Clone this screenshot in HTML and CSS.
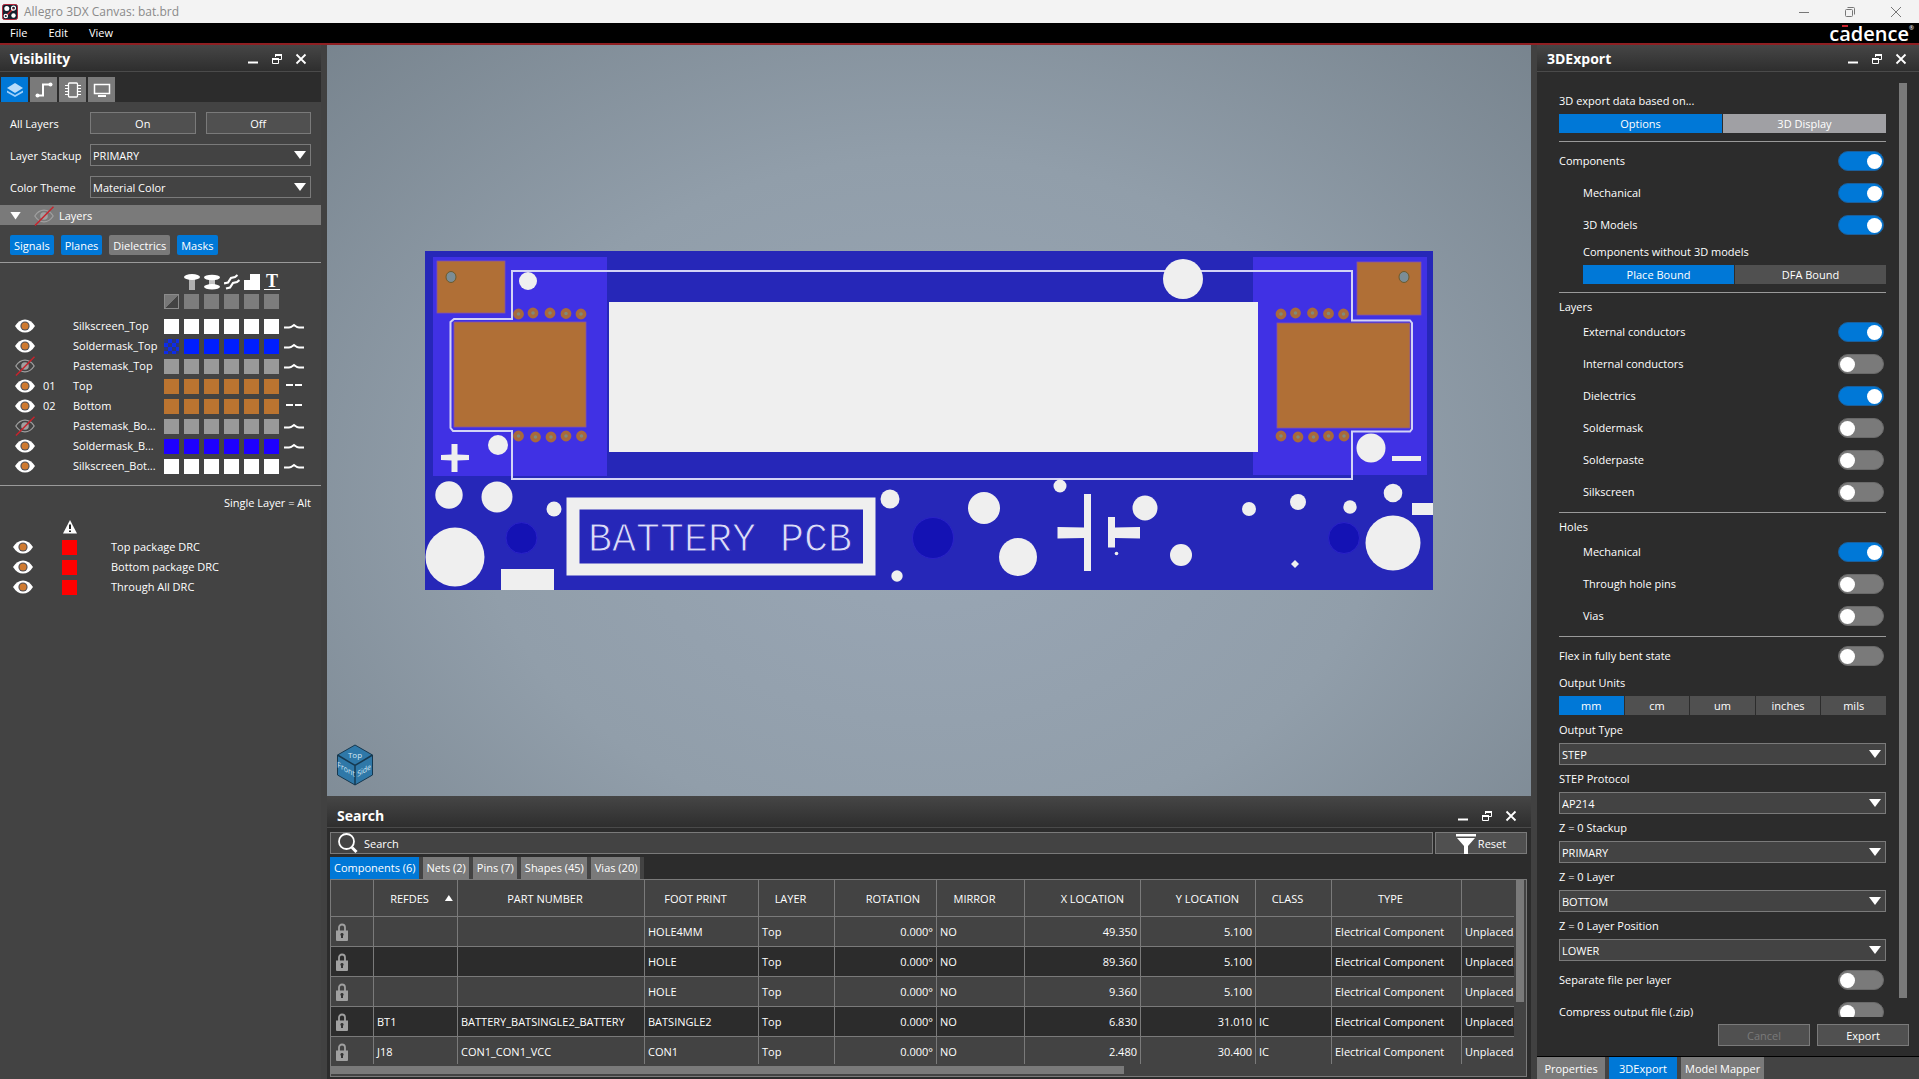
FILE: index.html
```html
<!DOCTYPE html>
<html lang="en">
<head>
<meta charset="utf-8">
<title>Allegro 3DX Canvas: bat.brd</title>
<link rel="stylesheet" href="styles.css">
</head>
<body>
<svg class="defs" aria-hidden="true">
  <symbol id="i-min" viewBox="0 0 12 12"><path d="M1 9.500h10" stroke="#fff" stroke-width="2"/></symbol>
  <symbol id="i-restore" viewBox="0 0 12 12"><path d="M4.500 4V1.500h6v5H8M1.500 5.500h6v5h-6z" fill="none" stroke="#fff"/><path d="M4 2h7M1 6h7" stroke="#fff" stroke-width="2"/></symbol>
  <symbol id="i-close" viewBox="0 0 12 12"><path d="M1.500 1.500l9 9M10.500 1.500l-9 9" stroke="#fff" stroke-width="1.800"/></symbol>
  <symbol id="i-eye" viewBox="0 0 20 14"><path d="M0 7Q4 .4 10 .4T20 7Q16 13.600 10 13.600T0 7z" fill="#fff"/><circle cx="10" cy="7" r="4.600" fill="#4d4d55"/><circle cx="10" cy="7" r="3.500" fill="#cf7a30"/></symbol>
  <symbol id="i-eye-off" viewBox="0 0 20 20"><path d="M.8 10Q4.500 4.200 10 4.200T19.200 10Q15.500 15.800 10 15.800T.8 10z" fill="none" stroke="#a0a0a0" stroke-width="1.200"/><circle cx="10" cy="10" r="3.800" fill="#a0a0a0"/><path d="M1 19.500L19.500 .8" stroke="#c8232c" stroke-width="1.500"/></symbol>
  <symbol id="i-wave" viewBox="0 0 20 8"><path d="M0 5.500h5q2 0 5-2.500q3 2.500 5 2.500h5" fill="none" stroke="#fff" stroke-width="2"/></symbol>
  <symbol id="i-dash" viewBox="0 0 20 8"><path d="M2 3h7M11 3h7" stroke="#fff" stroke-width="2"/></symbol>
  <symbol id="i-lock" viewBox="0 0 12 18"><path d="M3 8V4.500a3 3 0 0 1 6 0V8" fill="none" stroke="#a0a0a0" stroke-width="1.800"/><path d="M0 7.500h12V17a1 1 0 0 1-1 1H1a1 1 0 0 1-1-1z" fill="#a0a0a0"/><path d="M6 10a1.500 1.500 0 0 1 1 2.700V15H5v-2.300A1.500 1.500 0 0 1 6 10z" fill="#333"/></symbol>
</svg>

<div class="app">
  <header class="titlebar">
    <svg class="app-icon" viewBox="0 0 16 16" aria-hidden="true"><rect x=".5" y=".5" width="15" height="15" rx="2" fill="#14202e" stroke="#b5263a"/><path d="M4.500 11.500l7-7" stroke="#c8232c" stroke-width="1.500"/><circle cx="4.800" cy="4.500" r="2.500" fill="#fff"/><circle cx="11.500" cy="4.200" r="2" fill="none" stroke="#fff" stroke-width="1.200"/><circle cx="3.800" cy="12" r="1.700" fill="none" stroke="#fff" stroke-width="1.200"/><circle cx="11.500" cy="11.500" r="2.200" fill="#fff"/></svg>
    <h1 class="app-title">Allegro 3DX Canvas: bat.brd</h1>
    <div class="win-controls">
      <button aria-label="Minimize"><svg viewBox="0 0 12 12"><path d="M1 6.500h10"/></svg></button>
      <button aria-label="Restore"><svg viewBox="0 0 12 12"><rect x="1.500" y="3.500" width="7" height="7" rx="1"/><path d="M3.500 1.500h6a1 1 0 0 1 1 1v6"/></svg></button>
      <button aria-label="Close"><svg viewBox="0 0 12 12"><path d="M1 1l10 10M11 1L1 11"/></svg></button>
    </div>
  </header>
  <nav class="menubar">
    <button>File</button><button>Edit</button><button>View</button>
    <div class="brand">c<span class="brand-a">a</span>dence<span class="brand-mark">®</span></div>
  </nav>

  <div class="workspace">
    <aside class="panel left">
      <div class="panel-head">
        <h2>Visibility</h2>
        <button aria-label="Minimize"><svg><use href="#i-min"/></svg></button>
        <button aria-label="Float"><svg><use href="#i-restore"/></svg></button>
        <button aria-label="Close"><svg><use href="#i-close"/></svg></button>
      </div>
      <div class="mode-tabs">
        <button class="active" aria-label="Layers"><svg viewBox="0 0 18 16"><path d="M1 8.500l8 4.500 8-4.500v2l-8 4.500-8-4.500z" fill="#9fd0fb"/><path d="M9 1l8 5-8 5-8-5z" fill="#b9dcfa"/></svg></button>
        <button aria-label="Nets"><svg viewBox="0 0 18 16"><path d="M2 13.500h6v-11h7" fill="none" stroke="#fff" stroke-width="2"/><circle cx="2.500" cy="13.500" r="2" fill="#fff"/><circle cx="15.500" cy="2.500" r="2" fill="#fff"/></svg></button>
        <button aria-label="Components"><svg viewBox="0 0 18 16"><rect x="4.500" y="1" width="9" height="14" rx="1" fill="none" stroke="#fff" stroke-width="1.300"/><path d="M1 3.500h3M1 6.500h3M1 9.500h3M1 12.500h3M14 3.500h3M14 6.500h3M14 9.500h3M14 12.500h3" stroke="#fff"/></svg></button>
        <button aria-label="Display"><svg viewBox="0 0 18 16"><path d="M1.500 2.500h15v9h-15z" fill="none" stroke="#fff" stroke-width="1.500"/><path d="M5 14h8" stroke="#fff" stroke-width="2"/></svg></button>
      </div>
      <div class="form">
        <span>All Layers</span>
        <div class="pair"><button class="btn">On</button><button class="btn">Off</button></div>
        <label for="stackup">Layer Stackup</label>
        <div class="select"><select id="stackup"><option>PRIMARY</option></select></div>
        <label for="theme">Color Theme</label>
        <div class="select"><select id="theme"><option>Material Color</option></select></div>
      </div>
      <button class="group-bar"><i class="tri-down"></i><svg class="eye-off"><use href="#i-eye-off"/></svg>Layers</button>
      <div class="chips">
        <button class="chip on">Signals</button><button class="chip on">Planes</button><button class="chip">Dielectrics</button><button class="chip on">Masks</button>
      </div>
      <hr>
      <table class="layers">
        <colgroup><col class="c-eye"><col class="c-num"><col class="c-name"><col class="c-sw"><col class="c-sw"><col class="c-sw"><col class="c-sw"><col class="c-sw"><col class="c-sw"><col class="c-line"></colgroup>
        <thead>
          <tr class="objects">
            <td></td><td></td><td></td><td></td>
            <td><svg class="obj" viewBox="0 0 16 16"><path d="M5 4h6v12H5z" fill="#b0b0b0"/><ellipse cx="8" cy="3" rx="8" ry="3" fill="#fff"/></svg></td>
            <td><svg class="obj" viewBox="0 0 16 16"><path d="M5 3h6v10H5z" fill="#c4c4c4"/><ellipse cx="8" cy="3.500" rx="8" ry="2.700" fill="#fff"/><ellipse cx="8" cy="12.800" rx="8" ry="2.700" fill="#fff"/></svg></td>
            <td><svg class="obj" viewBox="0 0 16 16"><path d="M0 9.500l4-1 3-4.500 4-1 2.500-2M2 14.500l4-1 3-4.500 4-1 2.500-2" fill="none" stroke="#fff" stroke-width="2.200"/></svg></td>
            <td><svg class="obj" viewBox="0 0 16 16"><path d="M6 0h10v16H0V6h6z" fill="#fff"/></svg></td>
            <td><span class="obj text-obj">T</span></td>
            <td></td>
          </tr>
          <tr class="all">
            <td></td><td></td><td></td>
            <td><button class="sw half" aria-label="All"></button></td><td><button class="sw"></button></td><td><button class="sw"></button></td><td><button class="sw"></button></td><td><button class="sw"></button></td><td><button class="sw"></button></td><td></td>
          </tr>
        </thead>
        <tbody>
          <tr class="white"><td><svg class="eye"><use href="#i-eye"/></svg></td><td></td><td>Silkscreen_Top</td><td><button class="sw"></button></td><td><button class="sw"></button></td><td><button class="sw"></button></td><td><button class="sw"></button></td><td><button class="sw"></button></td><td><button class="sw"></button></td><td><svg class="line"><use href="#i-wave"/></svg></td></tr>
          <tr class="blue"><td><svg class="eye"><use href="#i-eye"/></svg></td><td></td><td>Soldermask_Top</td><td><button class="sw check"></button></td><td><button class="sw"></button></td><td><button class="sw"></button></td><td><button class="sw"></button></td><td><button class="sw"></button></td><td><button class="sw"></button></td><td><svg class="line"><use href="#i-wave"/></svg></td></tr>
          <tr class="grey"><td><svg class="eye-off"><use href="#i-eye-off"/></svg></td><td></td><td>Pastemask_Top</td><td><button class="sw"></button></td><td><button class="sw"></button></td><td><button class="sw"></button></td><td><button class="sw"></button></td><td><button class="sw"></button></td><td><button class="sw"></button></td><td><svg class="line"><use href="#i-wave"/></svg></td></tr>
          <tr class="copper"><td><svg class="eye"><use href="#i-eye"/></svg></td><td>01</td><td>Top</td><td><button class="sw"></button></td><td><button class="sw"></button></td><td><button class="sw"></button></td><td><button class="sw"></button></td><td><button class="sw"></button></td><td><button class="sw"></button></td><td><svg class="line"><use href="#i-dash"/></svg></td></tr>
          <tr class="copper"><td><svg class="eye"><use href="#i-eye"/></svg></td><td>02</td><td>Bottom</td><td><button class="sw"></button></td><td><button class="sw"></button></td><td><button class="sw"></button></td><td><button class="sw"></button></td><td><button class="sw"></button></td><td><button class="sw"></button></td><td><svg class="line"><use href="#i-dash"/></svg></td></tr>
          <tr class="grey"><td><svg class="eye-off"><use href="#i-eye-off"/></svg></td><td></td><td>Pastemask_Bo...</td><td><button class="sw"></button></td><td><button class="sw"></button></td><td><button class="sw"></button></td><td><button class="sw"></button></td><td><button class="sw"></button></td><td><button class="sw"></button></td><td><svg class="line"><use href="#i-wave"/></svg></td></tr>
          <tr class="violet"><td><svg class="eye"><use href="#i-eye"/></svg></td><td></td><td>Soldermask_B...</td><td><button class="sw"></button></td><td><button class="sw"></button></td><td><button class="sw"></button></td><td><button class="sw"></button></td><td><button class="sw"></button></td><td><button class="sw"></button></td><td><svg class="line"><use href="#i-wave"/></svg></td></tr>
          <tr class="white"><td><svg class="eye"><use href="#i-eye"/></svg></td><td></td><td>Silkscreen_Bot...</td><td><button class="sw"></button></td><td><button class="sw"></button></td><td><button class="sw"></button></td><td><button class="sw"></button></td><td><button class="sw"></button></td><td><button class="sw"></button></td><td><svg class="line"><use href="#i-wave"/></svg></td></tr>
        </tbody>
      </table>
      <hr>
      <p class="hint">Single Layer = Alt</p>
      <ul class="drc">
        <li class="drc-head"><svg viewBox="0 0 16 14"><path d="M8 0l7 13.500H1z" fill="#fff"/><path d="M8 4.500v4.500M8 10.500v1.500" stroke="#222" stroke-width="2"/></svg></li>
        <li><svg class="eye"><use href="#i-eye"/></svg><button class="sw" aria-label="Top package DRC color"></button><span>Top package DRC</span></li>
        <li><svg class="eye"><use href="#i-eye"/></svg><button class="sw" aria-label="Bottom package DRC color"></button><span>Bottom package DRC</span></li>
        <li><svg class="eye"><use href="#i-eye"/></svg><button class="sw" aria-label="Through All DRC color"></button><span>Through All DRC</span></li>
      </ul>
    </aside>

    <main class="center">
      <div class="viewport">
        <svg class="board" viewBox="327 45 1204 751" aria-label="Board">
          <rect x="425" y="251" width="1008" height="339" fill="#2627b8"/>
          <rect x="433" y="257" width="174" height="219" fill="#4031e4"/>
          <rect x="1253" y="257" width="174" height="218" fill="#4031e4"/>
          <g fill="#b06f36" stroke="#8a55a0" stroke-width=".8">
            <rect x="437" y="261" width="68" height="52"/>
            <rect x="454" y="322" width="132" height="105"/>
            <rect x="1357" y="262" width="64" height="53"/>
            <rect x="1277" y="323" width="133" height="105"/>
          </g>
          <g fill="#7b8d96" stroke="#6d5a2c"><ellipse cx="451" cy="277" rx="5" ry="5.500"/><ellipse cx="1404" cy="277" rx="5" ry="5.500"/></g>
          <path d="M512 271H1352V320.500H1410L1412 323V429L1410 431.500H1352V479H512V431H453L450.500 428V322L454 319H512Z" fill="none" stroke="#d3d3f6" stroke-width="2"/>
          <g fill="#efefef">
            <rect x="609" y="302" width="649" height="150"/>
            <circle cx="528" cy="281" r="9"/><circle cx="1183" cy="279" r="20"/>
            <circle cx="498" cy="445" r="10"/><circle cx="1371" cy="448" r="14.500"/>
            <circle cx="449" cy="495" r="13.700"/><circle cx="497" cy="497" r="15.500"/>
            <circle cx="554" cy="509" r="7.500"/><circle cx="455" cy="557" r="29.500"/>
            <circle cx="890" cy="499" r="9.500"/><circle cx="897" cy="576" r="5.700"/>
            <circle cx="984" cy="508" r="16"/><circle cx="1018" cy="557" r="19"/>
            <circle cx="1060" cy="486" r="6.500"/><circle cx="1145" cy="508" r="12.500"/>
            <circle cx="1181" cy="555" r="11"/><circle cx="1249" cy="509" r="7"/>
            <circle cx="1298" cy="502" r="8"/><circle cx="1350" cy="507" r="6.700"/>
            <circle cx="1393" cy="493" r="9.300"/><circle cx="1393" cy="543" r="27.500"/>
            <path d="M1295 560l4 4-4 4-4-4z"/><circle cx="1116.500" cy="553.500" r="1.800"/>
            <path d="M451.500 444h6v10.500l11.500 .5v5l-11.500 .5V472h-6V460.500l-10.500-.5v-5l10.500-.5z"/>
            <rect x="1392" y="456" width="29" height="5"/>
            <rect x="501" y="569" width="53" height="21"/>
            <rect x="1412" y="503" width="21" height="12"/>
            <path d="M1084 494h7v77h-7v-33l-26.500 .5v-11.500l26.500 .5z"/>
            <path d="M1108 517h7v10.500l25-.5v11.500l-25-.5v9.500h-7z"/>
            <path fill-rule="evenodd" d="M566.500 497.500h309v78h-309zM579.500 509.500v54h283.500v-54z"/>
          </g>
          <g fill="#1412b4" stroke="#2a22c8"><circle cx="521.500" cy="538" r="15.500"/><circle cx="933" cy="538" r="20.500"/><circle cx="1344" cy="538" r="15.500"/></g>
          <g fill="#7f8a7c" stroke="#a8693c" stroke-width="3.600">
            <circle cx="518.500" cy="314" r="3.600"/><circle cx="533" cy="313" r="3.600"/><circle cx="550" cy="313" r="3.600"/><circle cx="566" cy="313.500" r="3.600"/><circle cx="581" cy="314" r="3.600"/>
            <circle cx="518.500" cy="436" r="3.600"/><circle cx="535.500" cy="437" r="3.600"/><circle cx="551" cy="437" r="3.600"/><circle cx="566" cy="436" r="3.600"/><circle cx="581.500" cy="436" r="3.600"/>
            <circle cx="1281" cy="314" r="3.600"/><circle cx="1295.500" cy="313" r="3.600"/><circle cx="1312.500" cy="313" r="3.600"/><circle cx="1328.500" cy="313.500" r="3.600"/><circle cx="1343.500" cy="314" r="3.600"/>
            <circle cx="1281" cy="436" r="3.600"/><circle cx="1298" cy="437" r="3.600"/><circle cx="1313.500" cy="437" r="3.600"/><circle cx="1328.500" cy="436" r="3.600"/><circle cx="1344" cy="436" r="3.600"/>
          </g>
          <text class="silk" x="588" y="551">BATTERY PCB</text>
        </svg>
        <svg class="nav-cube" viewBox="0 0 38 42" aria-label="View cube">
          <path d="M19 1l17.500 10v20L19 41 1.500 31V11z" fill="#2f78a8" stroke="#16384f"/>
          <path d="M1.500 11L19 21.500 36.500 11M19 21.500V41" fill="none" stroke="#16384f" stroke-width="1.500"/>
          <text transform="translate(19 14)">Top</text>
          <text transform="matrix(.87 .5 0 1 10 28)">Front</text>
          <text transform="matrix(.87 -.5 0 1 28 29)">Side</text>
        </svg>
      </div>

      <section class="panel search">
        <div class="panel-head">
          <h2>Search</h2>
          <button aria-label="Minimize"><svg><use href="#i-min"/></svg></button>
          <button aria-label="Float"><svg><use href="#i-restore"/></svg></button>
          <button aria-label="Close"><svg><use href="#i-close"/></svg></button>
        </div>
        <div class="search-row">
          <label class="search-box">
            <svg viewBox="0 0 20 20" aria-hidden="true"><circle cx="8.500" cy="8.500" r="7.500" fill="none" stroke="#fff" stroke-width="1.800"/><path d="M14 14.500l4.500 4.500" stroke="#fff" stroke-width="3"/></svg>
            <input type="text" placeholder="Search" aria-label="Search">
          </label>
          <button class="btn reset"><svg viewBox="0 0 20 20" aria-hidden="true"><path d="M0 0h20v2.500H0zM1 4h18l-7 8v8H8v-8z" fill="#fff"/></svg>Reset</button>
        </div>
        <div class="tabs">
          <button class="active">Components (6)</button><button>Nets (2)</button><button>Pins (7)</button><button>Shapes (45)</button><button>Vias (20)</button>
        </div>
        <div class="table-frame">
          <div class="table-clip">
            <table class="results">
              <colgroup><col class="w-lock"><col class="w-ref"><col class="w-part"><col class="w-foot"><col class="w-layer"><col class="w-rot"><col class="w-mir"><col class="w-x"><col class="w-y"><col class="w-class"><col class="w-type"><col class="w-status"></colgroup>
              <thead><tr><th></th><th class="sorted">REFDES</th><th>PART NUMBER</th><th>FOOT PRINT</th><th>LAYER</th><th class="num">ROTATION</th><th>MIRROR</th><th class="num">X LOCATION</th><th class="num">Y LOCATION</th><th>CLASS</th><th>TYPE</th><th>STATUS</th></tr></thead>
              <tbody>
                <tr><td><svg class="lock"><use href="#i-lock"/></svg></td><td></td><td></td><td>HOLE4MM</td><td>Top</td><td class="num">0.000°</td><td>NO</td><td class="num">49.350</td><td class="num">5.100</td><td></td><td>Electrical Component</td><td>Unplaced,</td></tr>
                <tr><td><svg class="lock"><use href="#i-lock"/></svg></td><td></td><td></td><td>HOLE</td><td>Top</td><td class="num">0.000°</td><td>NO</td><td class="num">89.360</td><td class="num">5.100</td><td></td><td>Electrical Component</td><td>Unplaced,</td></tr>
                <tr><td><svg class="lock"><use href="#i-lock"/></svg></td><td></td><td></td><td>HOLE</td><td>Top</td><td class="num">0.000°</td><td>NO</td><td class="num">9.360</td><td class="num">5.100</td><td></td><td>Electrical Component</td><td>Unplaced,</td></tr>
                <tr><td><svg class="lock"><use href="#i-lock"/></svg></td><td>BT1</td><td>BATTERY_BATSINGLE2_BATTERY</td><td>BATSINGLE2</td><td>Top</td><td class="num">0.000°</td><td>NO</td><td class="num">6.830</td><td class="num">31.010</td><td>IC</td><td>Electrical Component</td><td>Unplaced,</td></tr>
                <tr><td><svg class="lock"><use href="#i-lock"/></svg></td><td>J18</td><td>CON1_CON1_VCC</td><td>CON1</td><td>Top</td><td class="num">0.000°</td><td>NO</td><td class="num">2.480</td><td class="num">30.400</td><td>IC</td><td>Electrical Component</td><td>Unplaced,</td></tr>
              </tbody>
            </table>
          </div>
          <div class="v-track"><div class="thumb"></div></div>
          <div class="h-track"><div class="thumb"></div></div>
        </div>
      </section>
    </main>

    <aside class="panel right">
      <div class="panel-head">
        <h2>3DExport</h2>
        <button aria-label="Minimize"><svg><use href="#i-min"/></svg></button>
        <button aria-label="Float"><svg><use href="#i-restore"/></svg></button>
        <button aria-label="Close"><svg><use href="#i-close"/></svg></button>
      </div>
      <div class="export-scroll">
        <div class="export-form">
          <div class="caption">3D export data based on...</div>
          <div class="seg"><button class="active">Options</button><button class="light">3D Display</button></div>
          <hr class="spaced">
          <label class="row">Components<input type="checkbox" class="toggle" checked></label>
          <label class="row sub">Mechanical<input type="checkbox" class="toggle" checked></label>
          <label class="row sub">3D Models<input type="checkbox" class="toggle" checked></label>
          <div class="sub">
            <div class="caption">Components without 3D models</div>
            <div class="seg"><button class="active">Place Bound</button><button>DFA Bound</button></div>
          </div>
          <hr class="spaced">
          <h3>Layers</h3>
          <label class="row sub">External conductors<input type="checkbox" class="toggle" checked></label>
          <label class="row sub">Internal conductors<input type="checkbox" class="toggle"></label>
          <label class="row sub">Dielectrics<input type="checkbox" class="toggle" checked></label>
          <label class="row sub">Soldermask<input type="checkbox" class="toggle"></label>
          <label class="row sub">Solderpaste<input type="checkbox" class="toggle"></label>
          <label class="row sub">Silkscreen<input type="checkbox" class="toggle"></label>
          <hr>
          <h3>Holes</h3>
          <label class="row sub">Mechanical<input type="checkbox" class="toggle" checked></label>
          <label class="row sub">Through hole pins<input type="checkbox" class="toggle"></label>
          <label class="row sub">Vias<input type="checkbox" class="toggle"></label>
          <hr>
          <label class="row">Flex in fully bent state<input type="checkbox" class="toggle"></label>
          <div class="caption">Output Units</div>
          <div class="seg"><button class="active">mm</button><button>cm</button><button>um</button><button>inches</button><button>mils</button></div>
          <label class="caption" for="otype">Output Type</label>
          <div class="select"><select id="otype"><option>STEP</option></select></div>
          <label class="caption" for="proto">STEP Protocol</label>
          <div class="select"><select id="proto"><option>AP214</option></select></div>
          <label class="caption" for="zstack">Z = 0 Stackup</label>
          <div class="select"><select id="zstack"><option>PRIMARY</option></select></div>
          <label class="caption" for="zlayer">Z = 0 Layer</label>
          <div class="select"><select id="zlayer"><option>BOTTOM</option></select></div>
          <label class="caption" for="zpos">Z = 0 Layer Position</label>
          <div class="select"><select id="zpos"><option>LOWER</option></select></div>
          <label class="row">Separate file per layer<input type="checkbox" class="toggle"></label>
          <label class="row">Compress output file (.zip)<input type="checkbox" class="toggle"></label>
        </div>
        <div class="scrollbar"></div>
      </div>
      <div class="actions"><button class="btn" disabled>Cancel</button><button class="btn">Export</button></div>
      <div class="dock-tabs"><button>Properties</button><button class="active">3DExport</button><button>Model Mapper</button></div>
    </aside>
  </div>
</div>
</body>
</html>
```
FILE: styles.css
```css
* { box-sizing: border-box; }

:root {
  --dark: #2c2c2c;
  --mid: #434343;
  --field: #505050;
  --line: #7a7a7a;
  --rule: #9a9a9a;
  --accent: #0078d7;
}

body {
  margin: 0;
  font: 11px/16px "Open Sans", "Noto Sans", sans-serif;
  color: #fff;
  background: var(--mid);
}

button, input, select { font: inherit; color: inherit; }
button { border: 0; padding: 0; background: none; }
h1, h2, h3, p, ul { margin: 0; padding: 0; font-size: inherit; font-weight: inherit; }
ul { list-style: none; }
svg { display: block; }
.defs { display: none; }
hr { border: 0; border-top: 1px solid var(--rule); margin: 0; }

.app { display: flex; flex-direction: column; height: 100vh; overflow: hidden; }

/* Title bar and menu */
.titlebar {
  display: flex; align-items: center; flex: none;
  height: 23px; padding-left: 2px;
  background: #f3f3f3; color: #8a8a8a;
}
.app-icon { width: 16px; height: 16px; }
.app-title { margin-left: 6px; flex: 1; font-size: 12px; }
.win-controls { display: flex; }
.win-controls button { width: 46px; height: 20px; display: grid; place-items: center; }
.win-controls svg { width: 12px; height: 12px; fill: none; stroke: #777; }

.menubar {
  display: flex; align-items: center; gap: 21px; flex: none;
  height: 22px; padding-left: 10px;
  background: #000; border-bottom: 2px solid #8f1f22;
}
.brand {
  display: flex; margin-left: auto; padding: 2px 5px 0 0;
  font-size: 20px; font-weight: 600; line-height: 20px;
}
.brand-a { background: linear-gradient(#c8232c, #c8232c) center 1px / 6px 2px no-repeat; }
.brand-mark { font-size: 6px; line-height: 8px; }

.workspace { display: flex; flex: 1; min-height: 0; }

/* Shared panel parts */
.panel-head {
  display: flex; align-items: center; flex: none;
  height: 27px; padding: 2px 8px 0 10px;
  background: linear-gradient(#464646, #2e2e2e);
  border-bottom: 1px solid #4a4a4a;
}
.panel-head h2 { flex: 1; font-size: 14px; font-weight: 700; }
.panel-head button { width: 24px; height: 20px; display: grid; place-items: center; }
.panel-head svg { width: 12px; height: 12px; }

.btn { height: 22px; padding-top: 1px; background: var(--field); border: 1px solid var(--line); }
.btn:disabled { color: #7a7a7a; }

.select { position: relative; background: var(--mid); }
.select select {
  display: block; width: 100%; height: 22px; padding: 1px 2px 0;
  appearance: none; background: none; border: 1px solid var(--line); border-radius: 0;
}
.select::after {
  content: ""; position: absolute; right: 5px; top: 7px;
  width: 12px; height: 8px; background: #fff;
  clip-path: polygon(0 0, 100% 0, 50% 100%); pointer-events: none;
}

/* Visibility panel */
.left { width: 327px; flex: none; background: var(--mid); border-right: 6px solid #414141; }
.mode-tabs { display: flex; gap: 2px; padding: 5px 0 0 1px; background: var(--dark); }
.mode-tabs button { width: 27px; height: 25px; display: grid; place-items: center; background: var(--line); }
.mode-tabs .active { background: var(--accent); }
.mode-tabs svg { width: 18px; height: 16px; }

.form {
  display: grid; grid-template-columns: 80px 1fr; row-gap: 10px; align-items: center;
  padding: 10px 10px 7px;
}
.form > span, .form > label { padding-top: 2px; }
.pair { display: grid; grid-template-columns: 1fr 1fr; gap: 10px; }

.group-bar { display: flex; align-items: center; width: 100%; height: 20px; padding: 1px 0 0 10px; background: var(--line); }
.tri-down { width: 11px; height: 8px; background: #fff; clip-path: polygon(0 0, 100% 0, 50% 100%); }
.group-bar .eye-off { margin: 0 5px 0 13px; }
.eye { width: 20px; height: 14px; }
.eye-off { width: 20px; height: 20px; }

.chips { display: flex; gap: 7px; padding: 10px 10px 7px; }
.chip { height: 20px; padding: 1px 4px 0; border-radius: 2px; background: var(--line); }
.chip.on { background: var(--accent); }

.layers { table-layout: fixed; width: 305px; margin: 9px 0 9px 15px; border-collapse: collapse; }
.c-eye { width: 28px; }
.c-num { width: 30px; }
.c-name { width: 91px; }
.c-sw { width: 20px; }
.layers td { height: 20px; padding: 0; line-height: 16px; white-space: nowrap; }
.layers .objects td { height: 19px; }
.layers tbody::before { content: ""; display: block; height: 5px; }
.obj { width: 16px; height: 16px; }
.text-obj { display: block; border-bottom: 1px solid #fff; font: 700 18px/14px "Liberation Serif", serif; text-align: center; }
.sw { display: block; width: 15px; height: 15px; background: var(--sw); }
.line { width: 20px; height: 8px; }
.all { --sw: #7d7d7d; }
.white { --sw: #fff; }
.blue { --sw: #001eff; }
.grey { --sw: #999; }
.copper { --sw: #bb7430; }
.violet { --sw: #1e00ff; }
.half { border: 1px solid #8a8a8a; background: linear-gradient(135deg, #777 50%, #434343 50%); }
.check { background: repeating-conic-gradient(#0d2bea 0 25%, #2c3678 0 50%) 0 0 / 8px 8px; }

.hint { padding: 9px 10px 0; text-align: right; }
.drc { --sw: #f00; padding: 6px 0 0 13px; }
.drc li { display: flex; align-items: center; height: 20px; }
.drc .sw { margin: 0 34px 0 29px; }
.drc .drc-head svg { width: 16px; height: 14px; margin-left: 49px; }

/* 3D viewport */
.center { display: flex; flex-direction: column; flex: 1; min-width: 0; }
.viewport {
  position: relative; flex: 1; min-height: 0;
  background: radial-gradient(ellipse 75% 90% at 50% 60%, #9aa7b6 0%, #919eaa 50%, #75818b 100%);
}
.board { width: 100%; height: 100%; }
.silk { font: 40px "Liberation Mono", monospace; fill: #dcdcf8; stroke: #2627b8; stroke-width: 1; }
.nav-cube { position: absolute; left: 9px; bottom: 10px; width: 38px; height: 42px; }
.nav-cube text { font-size: 8px; fill: #d5e8f5; text-anchor: middle; }

/* Search panel */
.search { flex: none; padding-bottom: 2px; background: var(--dark); }
.search .panel-head { height: 32px; padding-top: 8px; }
.search-row { display: flex; gap: 2px; padding: 4px 4px 3px 3px; }
.search-box {
  display: flex; align-items: center; flex: 1; height: 22px; padding-left: 7px;
  background: var(--mid); border: 1px solid var(--line);
}
.search-box svg, .reset svg { width: 20px; height: 20px; }
.search-box input { flex: 1; height: 20px; padding: 1px 0 0; margin-left: 6px; border: 0; background: none; outline: 0; }
.search-box input::placeholder { color: #fff; }
.reset { display: flex; align-items: center; justify-content: center; gap: 2px; width: 92px; }

.tabs { display: flex; padding-left: 3px; }
.tabs button { height: 22px; padding: 0 3px 0 4px; background: var(--line); border-right: 4px solid var(--mid); box-sizing: content-box; }
.tabs .active { background: var(--accent); }

.table-frame {
  display: grid; grid-template: 184px 12px / minmax(0, 1fr) 12px;
  margin: 0 4px 0 3px; background: var(--mid); border: 1px solid var(--line);
}
.table-clip { overflow: hidden; }
.v-track .thumb { width: 8px; height: 122px; margin-left: 2px; background: var(--line); }
.h-track .thumb { width: 67%; height: 8px; margin-top: 2px; background: var(--line); }

.results { table-layout: fixed; width: 1290px; border-collapse: separate; border-spacing: 0; }
.w-lock { width: 43px; }
.w-ref { width: 84px; }
.w-part { width: 187px; }
.w-foot { width: 114px; }
.w-layer { width: 76px; }
.w-rot { width: 102px; }
.w-mir { width: 88px; }
.w-x { width: 116px; }
.w-y { width: 115px; }
.w-class { width: 76px; }
.w-type { width: 130px; }
.results th, .results td { border: solid var(--line); border-width: 0 1px 1px 0; padding: 0 3px; white-space: nowrap; }
.results th { height: 37px; padding: 2px 12px 0 0; font-weight: 400; text-align: center; }
.results td { height: 30px; text-align: left; }
.results .num { text-align: right; }
.results th.num { padding-right: 16px; }
.results tbody tr:nth-child(even) { background: var(--dark); }
.lock { width: 12px; height: 18px; margin-left: 2px; }
.sorted::after {
  content: ""; display: inline-block; width: 8px; height: 6px; margin: 0 -8px 2px 16px;
  background: #fff; clip-path: polygon(50% 0, 100% 100%, 0 100%);
}
.results th.sorted { padding-right: 0; padding-left: 4px; }

/* 3DExport panel */
.right { display: flex; flex-direction: column; width: 388px; flex: none; background: var(--dark); border-left: 6px solid #414141; }
.right .panel-head { padding-right: 6px; }
.export-scroll { display: flex; flex: 1; min-height: 0; overflow: hidden; }
.export-form { flex: 1; padding: 18px 13px 0 22px; }
.export-form hr { margin: 4px 0 3px; }
.export-form .spaced { margin-top: 8px; }
.export-form .caption, .export-form h3 { display: block; height: 20px; line-height: 22px; }
.export-form .caption { margin-bottom: 4px; }
.sub { padding-left: 24px; }
.row { display: flex; align-items: center; justify-content: space-between; height: 32px; padding-right: 2px; line-height: 18px; }
.seg { display: flex; gap: 1px; margin-bottom: 4px; }
.seg button { flex: 1 1 0; height: 19px; background: var(--field); }
.seg .light { background: #a0a0a4; }
.seg .active { background: var(--accent); }
.export-form .select { margin-bottom: 3px; }

.toggle {
  appearance: none; width: 46px; height: 20px; margin: 0; padding: 2px 1px;
  border: 1px solid #696969; border-radius: 10px; background: var(--line);
}
.toggle::before { content: ""; display: block; width: 15px; height: 15px; border-radius: 50%; background: #fff; }
.toggle:checked { background: var(--accent); border-color: #1a5f9c; }
.toggle:checked::before { margin-left: auto; }

.scrollbar { width: 8px; margin: 11px 12px 19px 0; background: var(--line); }
.actions { display: flex; gap: 7px; justify-content: flex-end; padding: 7px 10px 10px; }
.actions .btn { width: 92px; }
.dock-tabs { display: flex; gap: 4px; background: var(--mid); border-top: 1px solid #000; }
.dock-tabs button { height: 22px; padding: 1px 4px 0; min-width: 68px; background: var(--line); }
.dock-tabs .active { background: var(--accent); }
```
